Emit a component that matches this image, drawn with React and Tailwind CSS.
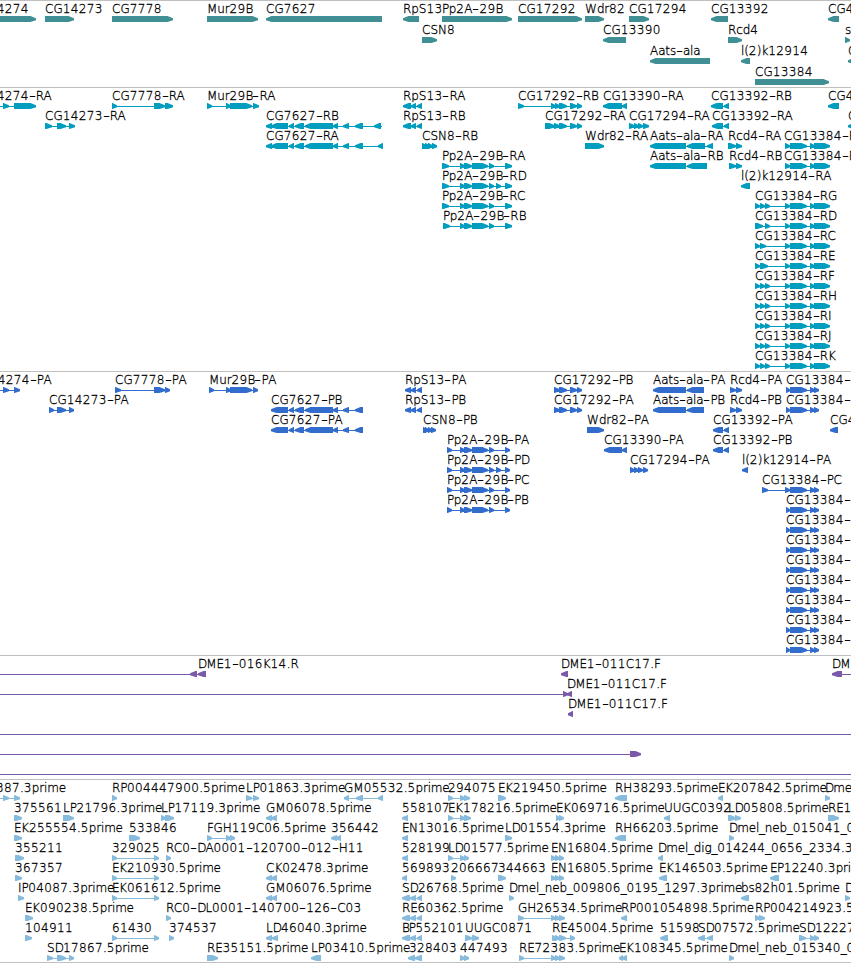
import React from "react";

// A feature is [label x, label, exon ranges, strand, optional line range].
const P = 1;
const M = -1;

const RPS13 = "403-411 411-416 417-422";
const CG7627 = "266-272 271-288 289-294 295-304 305-333 333-338 343-349 355-363";
const PP2A = "460-465 464-472 472-488 489-494";
const CG13384_R = "785-790 790-807 810-815 814-830";
const CG13384_P = "786-790 790-807 810-815 814-819";
const THREE = "755-760 760-765 765-770 ";
const CG7627_P = "271-288 289-294 295-304 305-333 333-338 343-349 355-363";
const EN = "551-556 555-560 559-564";

const genes = [
  [
    [-29, "CG14274", "-20-36", P],
    [45, "CG14273", "45-74", P],
    [112, "CG7778", "112-173", P],
    [207, "Mur29B", "207-258", P],
    [266, "CG7627", "266-382", M],
    [403, "RpS13", "403-419", M],
    [442, "Pp2A-29B", "442-512", P],
    [518, "CG17292", "518-582", P],
    [585, "Wdr82", "585-604", P],
    [629, "CG17294", "629-649", P],
    [711, "CG13392", "711-728", M],
    [828, "CG4", "828-839", M],
  ],
  [
    [422, "CSN8", "422-437", P],
    [603, "CG13390", "603-626", M],
    [728, "Rcd4", "728-742", P],
    [845, "s", "845-850", P],
  ],
  [
    [650, "Aats-ala", "650-710", M],
    [741, "l(2)k12914", "741-750", M],
    [848, "C", "848-858", M],
  ],
  [[755, "CG13384", "755-829", P]],
];

const transcripts = [
  [
    [-29, "CG14274-RA", "3-9 14-36", P, [0, 30]],
    [112, "CG7778-RA", "112-117 154-165 165-173", P],
    [207, "Mur29B-RA", "207-212 226-231 230-252 253-259", P],
    [403, "RpS13-RA", RPS13, M],
    [518, "CG17292-RB", "518-524 551-556 555-560 559-567 570-577 577-582", P],
    [603, "CG13390-RA", "603-622 622-627", M],
    [711, "CG13392-RB", "711-723 724-729", M],
    [828, "CG4", "828-839", M],
  ],
  [
    [45, "CG14273-RA", "45-52 57-66 69-75", P],
    [266, "CG7627-RB", CG7627 + " 374-381", M, [266, 382]],
    [403, "RpS13-RB", RPS13, M],
    [545, "CG17292-RA", "545-555 554-560 559-567 570-577 577-582", P],
    [629, "CG17294-RA", "629-635 634-639 638-643 643-649", P],
    [712, "CG13392-RA", "712-723 724-729", M],
    [848, "C", "848-858", M],
  ],
  [
    [266, "CG7627-RA", CG7627 + " 378-383", M],
    [422, "CSN8-RB", "422-427 425-430 428-433 432-437", P],
    [585, "Wdr82-RA", "585-604", P],
    [650, "Aats-ala-RA", "650-686 687-705 707-713", M],
    [728, "Rcd4-RA", "728-736 736-742", P],
    [784, "CG13384-RA", CG13384_R, P],
  ],
  [
    [442, "Pp2A-29B-RA", "442-449 " + PP2A + " 505-512", P],
    [650, "Aats-ala-RB", "650-686 687-707", M],
    [729, "Rcd4-RB", "729-736 736-742", P],
    [784, "CG13384-RB", CG13384_R, P],
  ],
  [
    [442, "Pp2A-29B-RD", "442-449 " + PP2A + " 496-501 505-512", P],
    [741, "l(2)k12914-RA", "741-750", M],
  ],
  [
    [442, "Pp2A-29B-RC", "442-449 " + PP2A + " 505-512", P],
    [755, "CG13384-RG", THREE + CG13384_R, P],
  ],
  [
    [443, "Pp2A-29B-RB", "443-450 " + PP2A + " 505-512", P],
    [755, "CG13384-RD", "755-763 765-770 " + CG13384_R, P],
  ],
  [[755, "CG13384-RC", "755-760 760-766 " + CG13384_R, P]],
  [[755, "CG13384-RE", "755-760 760-768 " + CG13384_R, P]],
  [[755, "CG13384-RF", THREE + CG13384_R, P]],
  [[755, "CG13384-RH", THREE + CG13384_R, P]],
  [[755, "CG13384-RI", THREE + CG13384_R, P]],
  [[755, "CG13384-RJ", THREE + CG13384_R, P]],
  [[755, "CG13384-RK", THREE + CG13384_R, P]],
];

const CG13384_ROW = [[786, "CG13384-P", CG13384_P, P]];

const proteins = [
  [
    [-28, "CG14274-PA", "3-9 14-20", P, [0, 18]],
    [115, "CG7778-PA", "115-121 154-165 165-170", P],
    [209, "Mur29B-PA", "209-214 226-231 230-252 253-258", P],
    [405, "RpS13-PA", "405-411 411-416 417-422", M],
    [554, "CG17292-PB", "554-560 559-567 570-577 577-582", P],
    [653, "Aats-ala-PA", "653-686 687-704", M],
    [730, "Rcd4-PA", "730-736 736-742", P],
    ...CG13384_ROW,
  ],
  [
    [49, "CG14273-PA", "49-54 57-66 69-74", P],
    [271, "CG7627-PB", CG7627_P, M],
    [405, "RpS13-PB", "405-411 411-416 417-422", M],
    [554, "CG17292-PA", "554-560 559-567 570-577 577-582", P],
    [653, "Aats-ala-PB", "653-686 687-704", M],
    [730, "Rcd4-PB", "730-736 736-742", P],
    ...CG13384_ROW,
  ],
  [
    [271, "CG7627-PA", CG7627_P, M],
    [423, "CSN8-PB", "423-427 425-429 428-432 431-436", P],
    [587, "Wdr82-PA", "587-604", P],
    [713, "CG13392-PA", "713-723 724-729", M],
    [830, "CG4", "830-838", M],
  ],
  [
    [447, "Pp2A-29B-PA", "447-452 " + PP2A + " 505-510", P],
    [604, "CG13390-PA", "604-622 622-627", M],
    [713, "CG13392-PB", "713-723 724-729", M],
  ],
  [
    [447, "Pp2A-29B-PD", "447-452 " + PP2A + " 496-501 505-510", P],
    [630, "CG17294-PA", "630-635 634-639 638-643 643-648", P],
    [742, "l(2)k12914-PA", "742-748", M],
  ],
  [
    [447, "Pp2A-29B-PC", "447-452 " + PP2A + " 505-510", P],
    [762, "CG13384-PC", "762-768 785-790 790-807 810-815 814-819", P],
  ],
  [[447, "Pp2A-29B-PB", "447-452 " + PP2A + " 505-510", P], ...CG13384_ROW],
  CG13384_ROW,
  CG13384_ROW,
  CG13384_ROW,
  CG13384_ROW,
  CG13384_ROW,
  CG13384_ROW,
  CG13384_ROW,
];

const clones = [
  [
    [198, "DME1-016K14.R", "190-197 198-206", M, [0, 200]],
    [561, "DME1-011C17.F", "561-568", M],
    [832, "DM", "832-842", M, [836, 851]],
  ],
  [
    [567, "", "563-568", P, [0, 564]],
    [567, "DME1-011C17.F", "567-572", M],
  ],
  [[568, "DME1-011C17.F", "568-573", M]],
  [[0, "", "", P, [0, 851]]],
  [[0, "", "630-641", P, [0, 636]]],
  [[0, "", "", P, [0, 851]]],
];

const ests = [
  [
    [-4, "387.3prime", "3-9 14-20", P, [0, 18]],
    [112, "RP004447900.5prime", "112-117", P],
    [246, "LP01863.3prime", "246-252 253-259", P],
    [344, "GM05532.5prime", "344-349 356-363 378-383", M],
    [448, "294075", "448-453 460-465 464-470", P],
    [498, "EK219450.5prime", "498-506", P],
    [615, "RH38293.5prime", "615-627", M],
    [718, "EK207842.5prime", "718-723", M],
    [825, "Dmel", "825-830", P],
  ],
  [
    [14, "375561", "14-22", P],
    [63, "LP21796.3prime", "63-74", P],
    [161, "LP17119.3prime", "161-166 165-174", P],
    [266, "GM06078.5prime", "266-272 271-277", M],
    [402, "558107", "402-408", M],
    [448, "EK178216.5prime", "448-453 460-465 464-471", P],
    [556, "EK069716.5prime", "556-560 559-564", P],
    [664, "UUGC0392", "664-670", M],
    [728, "LD05808.5prime", "728-736 735-741", P],
    [828, "RE1", "828-839", P],
  ],
  [
    [14, "EK255554.5prime", "14-22", P],
    [129, "533846", "129-140", P],
    [207, "FGH119C06.5prime", "207-212 226-231 230-235", P],
    [331, "356442", "331-337 336-341", M],
    [402, "EN13016.5prime", "402-408", M],
    [505, "LD01554.3prime", "505-512", P],
    [615, "RH66203.5prime", "615-626", M],
    [729, "Dmel_neb_015041_0", "729-734", P],
  ],
  [
    [15, "355211", "15-24", P],
    [112, "329025", "112-117 154-159", P],
    [166, "RC0-DA0001-120700-012-H11", "166-171", P],
    [402, "528199", "402-408", M],
    [448, "LD01577.5prime", "448-453 460-465 464-469", P],
    [551, "EN16804.5prime", EN, P],
    [658, "Dmel_dig_014244_0656_2334.3prime", "658-663", M],
  ],
  [
    [15, "367357", "15-22", P],
    [112, "EK210930.5prime", "112-117 154-159", P],
    [266, "CK02478.3prime", "266-272 271-277", M],
    [402, "569893", "402-407", M],
    [451, "206667", "451-456", P],
    [498, "344663", "498-506", P],
    [551, "EN16805.5prime", EN, P],
    [659, "EK146503.5prime", "659-667", M],
    [770, "EP12240.3prime", "770-779", M],
  ],
  [
    [18, "IP04087.3prime", "18-24", P],
    [112, "EK061612.5prime", "112-117 154-159", P],
    [266, "GM06076.5prime", "266-272 271-277", M],
    [402, "SD26768.5prime", "402-410 410-416 417-422", M],
    [509, "Dmel_neb_009806_0195_1297.3prime", "509-514", P],
    [741, "bs82h01.5prime", "741-749", M],
    [845, "D", "845-850", P],
  ],
  [
    [25, "EK090238.5prime", "25-33", P],
    [166, "RC0-DL0001-140700-126-C03", "166-171", P],
    [402, "RE60362.5prime", "402-410 410-416 417-422", M],
    [518, "GH26534.5prime", "518-524 551-556 555-560 559-565", P],
    [621, "RP001054898.5prime", "621-627", M],
    [755, "RP004214923.5prime", "755-760 759-765", P],
  ],
  [
    [25, "104911", "25-32", P],
    [112, "61430", "112-117 154-159", P],
    [169, "374537", "169-174", P],
    [266, "LD46040.3prime", "266-272 272-278", M],
    [402, "BP552101", "402-410 410-416 417-422", M],
    [465, "UUGC0871", "465-472 472-479", P],
    [552, "RE45004.5prime", "552-557 555-560 559-566 570-575", P],
    [660, "51598", "660-668", M],
    [698, "SD07572.5prime", "698-705 707-713", M],
    [799, "SD12227.5prime", "799-806 810-815 814-819", P],
  ],
  [
    [47, "SD17867.5prime", "47-53 57-66 69-74", P],
    [207, "RE35151.5prime", "207-218", P],
    [311, "LP03410.5prime", "311-321", M],
    [409, "328403", "408-415 415-422", M],
    [460, "447493", "460-465 464-469", P],
    [519, "RE72383.5prime", "519-524 551-556 555-560 559-565", P],
    [619, "EK108345.5prime", "619-623 622-627", M],
    [729, "Dmel_neb_015340_0", "729-734", P],
  ],
];

function parseRanges(text) {
  return text
    .split(" ")
    .filter(Boolean)
    .map((part) => {
      const m = part.match(/^(-?\d+)-(\d+)$/);
      return [Number(m[1]), Number(m[2])];
    });
}

// Six pixels high, blunt at the tail and tapering to a short nose along the strand.
function arrow([a, b], strand) {
  const head = Math.min(6, b - a);
  if (strand > 0) {
    const s = b - head;
    return `M${a} 0H${s + 0.5}L${b} 2.2V4.2L${s + 0.5} 6H${a}Z`;
  }
  const s = a + head;
  return `M${b} 0H${s - 0.5}L${a} 2.2V4.2L${s - 0.5} 6H${b}Z`;
}

function trackingFor(part) {
  if (/^\d/.test(part)) return "tracking-[0.37px]";
  if (/^[BD]/.test(part)) return "tracking-[-1px]";
  if (/^[EFP]/.test(part)) return "tracking-[-0.5px]";
  if (/^[a-z_]/.test(part)) return "tracking-[-0.2px]";
  return "";
}

function Label({ text }) {
  return text
    .split(/(\d+|-|[BD]+|[EFP]+|[a-z_]+)/)
    .filter(Boolean)
    .map((part, i) => {
      if (part === "-")
        return (
          <span key={i} className="inline-block w-[7px] scale-x-150 text-center">
            -
          </span>
        );
      return (
        <span key={i} className={trackingFor(part)}>
          {part}
        </span>
      );
    });
}

function Row({ features, tall }) {
  return (
    <div className={tall ? "relative h-[21px]" : "relative h-5"}>
      <svg className="absolute left-0 top-[15px] h-1.5 w-[851px] fill-current" viewBox="0 0 851 6">
        {features.map(([, , ranges, strand, line], i) => {
          const exons = parseRanges(ranges);
          const [from, to] = line || [exons[0][0] + 1, exons[exons.length - 1][1] - 1];
          return (
            <g key={i}>
              {(line || exons.length > 1) && <rect x={from} y="3" width={to - from} height="1" />}
              <path d={exons.map((e) => arrow(e, strand)).join("")} />
            </g>
          );
        })}
      </svg>
      {features.map(([x, label], i) => (
        <span
          key={i}
          className="absolute top-0 whitespace-pre text-[12px] font-extralight leading-4 text-black [-webkit-text-stroke:0.3px_black]"
          style={{ left: x }}
        >
          <Label text={label} />
        </span>
      ))}
    </div>
  );
}

function Track({ rows, className, tall }) {
  return (
    <section className={"border-t border-[#c0c0c0] " + className}>
      {rows.map((features, i) => (
        <Row key={i} features={features} tall={tall} />
      ))}
    </section>
  );
}

export default function App() {
  return (
    <main className="flex h-[963px] w-[851px] flex-col overflow-hidden border-b border-[#c0c0c0] bg-white font-['DejaVu_Sans',sans-serif]">
      <Track rows={genes} tall className="pb-0.5 text-[#3f8f94]" />
      <Track rows={transcripts} className="pb-[3px] text-[#009dbf]" />
      <Track rows={proteins} className="pb-[3px] text-[#326ccd]" />
      <Track rows={clones} className="pb-[3px] text-[#7a5aa8]" />
      <Track rows={ests} className="pb-0.5 text-[#87bbdd]" />
    </main>
  );
}
